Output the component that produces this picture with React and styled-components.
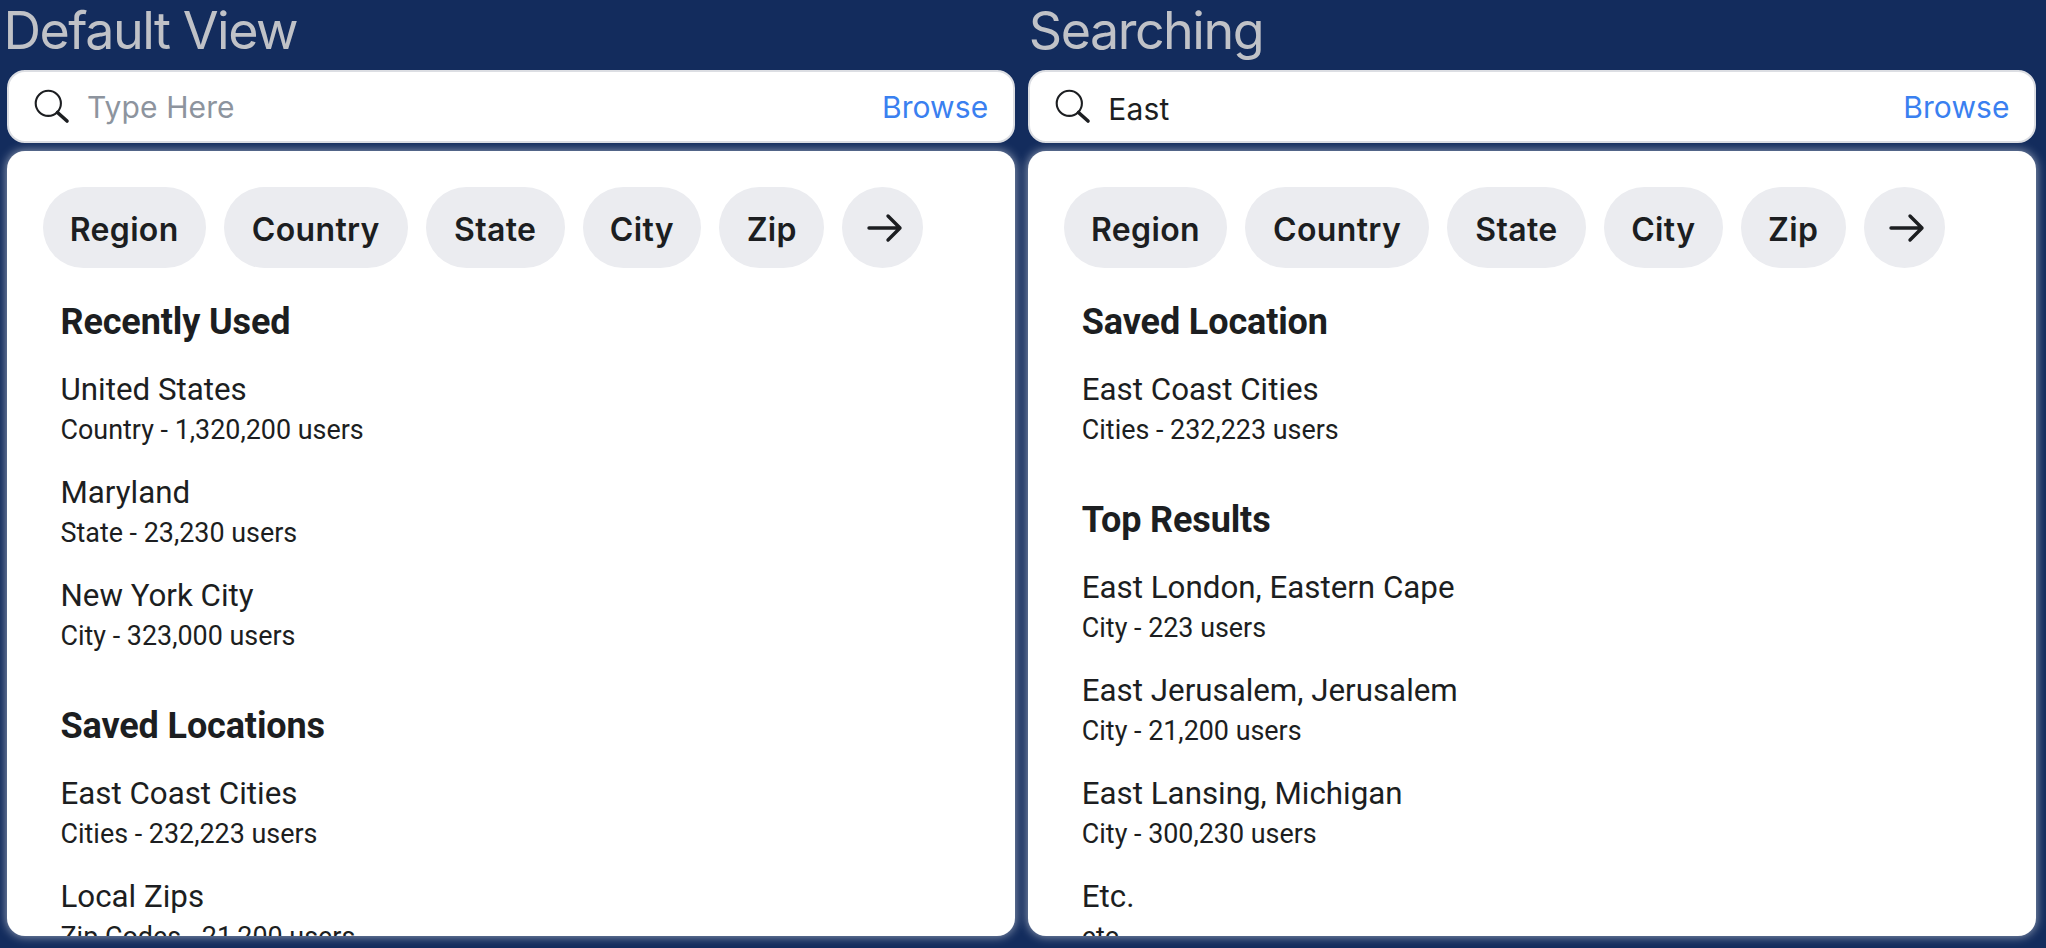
import React from "react";
import styled, { createGlobalStyle } from "styled-components";

const Global = createGlobalStyle`
  * { box-sizing: border-box; }
  html, body { margin: 0; background: #132c5d; }
  body { height: 948px; overflow: hidden; }
`;

const Page = styled.main`
  display: flex;
  gap: 13px;
  height: 948px;
  padding-left: 6.5px;
  color: #1c1e21;
  background: #132c5d;
`;

const Column = styled.section`
  display: flex;
  flex-direction: column;
  width: 1008.3px;
`;

const Title = styled.h1`
  flex: none;
  height: 70px;
  margin: 0 0 0 ${(p) => p.$indent || 0}px;
  font: 400 52px/61px Inter, sans-serif;
  letter-spacing: ${(p) => p.$spacing || 0}px;
  color: #c0c2c7;
  white-space: nowrap;
`;

const SearchBar = styled.div`
  display: flex;
  align-items: center;
  flex: none;
  height: 73px;
  margin-bottom: 8px;
  padding: 0 24.5px 0 25px;
  border: 2px solid #dcdee3;
  border-radius: 18px;
  background: #fff;
`;

const SearchText = styled.span`
  flex: 1;
  padding-left: 17.5px;
  padding-top: ${(p) => (p.$filled ? 4 : 0)}px;
  font: 400 30px/40px Inter, sans-serif;
  letter-spacing: ${(p) => (p.$filled ? 0.2 : 0.1)}px;
  color: ${(p) => (p.$filled ? "#1c1e21" : "#8d949e")};
`;

const Browse = styled.a`
  font: 400 30px/40px Inter, sans-serif;
  letter-spacing: 0.1px;
  color: #3a80f0;
`;

const Panel = styled.div`
  flex: none;
  height: 784.5px;
  padding: 36px 36px 0;
  border-radius: 18px;
  background: #fff;
  box-shadow: 0 0 10px 1px rgba(255, 255, 255, 0.5);
  overflow: hidden;
`;

const Chips = styled.div`
  display: flex;
  gap: 18px;
  margin-bottom: 33px;
`;

const Chip = styled.button`
  display: flex;
  align-items: center;
  justify-content: center;
  width: ${(p) => p.$width}px;
  height: 81px;
  padding: 5px 0 0;
  border: 0;
  border-radius: 41px;
  background: #ebecf0;
  color: #1c1e21;
  font: 600 32px/40px Inter, sans-serif;
  letter-spacing: 0.35px;
`;

const ArrowChip = styled(Chip)`
  padding: 0 0 0 5px;
`;

const Group = styled.section`
  height: ${(p) => p.$height}px;
  padding-left: 18px;
`;

const GroupTitle = styled.h2`
  margin: 0;
  height: 69px;
  font: 700 36px/42px Roboto, sans-serif;
  letter-spacing: -0.13px;
`;

const Item = styled.div`
  height: 103px;
`;

const ItemName = styled.div`
  font: 400 31.3px/40px Roboto, sans-serif;
`;

const ItemMeta = styled.div`
  font: 400 26.9px/40px Roboto, sans-serif;
`;

const SearchIcon = () => (
  <svg width="36" height="36" viewBox="0 0 36 36" fill="none" stroke="#1c1e21">
    <circle cx="14.3" cy="14.3" r="12.6" strokeWidth="2.1" />
    <path d="M23.5 23.5 L33 32" strokeWidth="3.6" strokeLinecap="round" />
  </svg>
);

const ArrowIcon = () => (
  <svg width="36" height="30" viewBox="0 0 36 30" fill="none" stroke="#1c1e21" strokeWidth="3.4" strokeLinecap="round" strokeLinejoin="round">
    <path d="M2 15 H33 M21 3 L33 15 L21 27" />
  </svg>
);

const chips = [
  ["Region", 163.3],
  ["Country", 184],
  ["State", 138.8],
  ["City", 118.7],
  ["Zip", 105],
];

const views = [
  {
    title: "Default View",
    indent: -3,
    spacing: -1.5,
    placeholder: "Type Here",
    groups: [
      { title: "Recently Used", items: [["United States", "Country - 1,320,200 users"], ["Maryland", "State - 23,230 users"], ["New York City", "City - 323,000 users"]] },
      { title: "Saved Locations", items: [["East Coast Cities", "Cities - 232,223 users"], ["Local Zips", "Zip Codes - 21,200 users"]] },
    ],
  },
  {
    title: "Searching",
    indent: 1,
    spacing: -1.5,
    query: "East",
    groups: [
      { title: "Saved Location", items: [["East Coast Cities", "Cities - 232,223 users"]] },
      { title: "Top Results", items: [["East London, Eastern Cape", "City - 223 users"], ["East Jerusalem, Jerusalem", "City - 21,200 users"], ["East Lansing, Michigan", "City - 300,230 users"], ["Etc.", "etc."]] },
    ],
  },
];

const SearchView = ({ title, indent, spacing, placeholder, query, groups }) => (
  <Column>
    <Title $indent={indent} $spacing={spacing}>{title}</Title>
    <SearchBar>
      <SearchIcon />
      <SearchText $filled={!!query}>{query || placeholder}</SearchText>
      <Browse>Browse</Browse>
    </SearchBar>
    <Panel>
      <Chips>
        {chips.map(([label, width]) => (
          <Chip key={label} $width={width}>{label}</Chip>
        ))}
        <ArrowChip $width={81} aria-label="More"><ArrowIcon /></ArrowChip>
      </Chips>
      {groups.map((g) => (
        <Group key={g.title} $height={94.5 + 103 * g.items.length}>
          <GroupTitle>{g.title}</GroupTitle>
          {g.items.map(([name, meta]) => (
            <Item key={name}>
              <ItemName>{name}</ItemName>
              <ItemMeta>{meta}</ItemMeta>
            </Item>
          ))}
        </Group>
      ))}
    </Panel>
  </Column>
);

export default function App() {
  return (
    <>
      <Global />
      <Page>
        {views.map((v) => (
          <SearchView key={v.title} {...v} />
        ))}
      </Page>
    </>
  );
}
